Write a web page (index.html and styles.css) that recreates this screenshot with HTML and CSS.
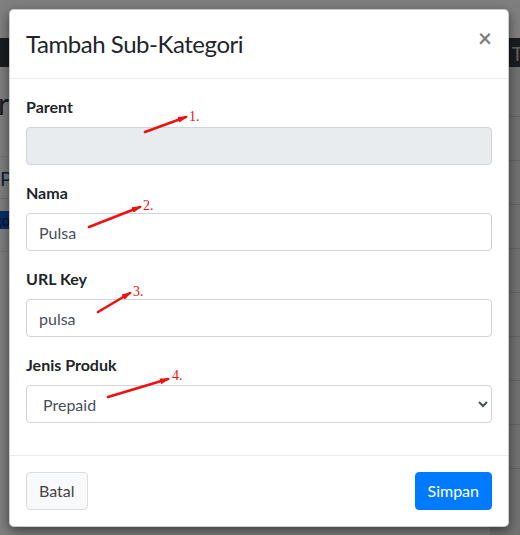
FILE: index.html
```html
<!DOCTYPE html>
<html lang="id">
<head>
<meta charset="utf-8">
<title>Tambah Sub-Kategori</title>
<link rel="stylesheet" href="styles.css">
</head>
<body>
<div class="page">
  <div class="page-top"></div>
  <div class="navbar"><span class="nav-text">Ti</span></div>
  <div class="page-main">
    <div class="page-left">
      <div class="big-r">r</div>
      <div class="row-line row-p">P</div>
      <div class="row-line row-go"><span class="go">go</span></div>
    </div>
    <div class="page-right">
      <div class="r-row"></div><div class="r-row"></div><div class="r-row"></div>
      <div class="r-row"></div><div class="r-row"></div><div class="r-row"></div>
      <div class="r-row"></div><div class="r-row"></div><div class="r-row"></div>
    </div>
  </div>
</div>
<div class="backdrop"></div>

<div class="modal">
  <div class="modal-header">
    <h4 class="modal-title">Tambah Sub-Kategori</h4>
    <button class="close" type="button">&times;</button>
  </div>
  <div class="modal-body">
    <div class="form-group">
      <label class="label">Parent</label>
      <input class="form-control" type="text" readonly>
    </div>
    <div class="form-group">
      <label class="label">Nama</label>
      <input class="form-control" type="text" value="Pulsa">
    </div>
    <div class="form-group">
      <label class="label">URL Key</label>
      <input class="form-control" type="text" value="pulsa">
    </div>
    <div class="form-group">
      <label class="label">Jenis Produk</label>
      <select class="form-control select">
        <option>Prepaid</option>
        <option>Postpaid</option>
      </select>
    </div>
  </div>
  <div class="modal-footer">
    <button class="btn btn-default" type="button">Batal</button>
    <button class="btn btn-primary" type="button">Simpan</button>
  </div>

  <svg class="notes" width="500" height="520" viewBox="0 0 500 520">
    <defs>
      <marker id="ah" markerWidth="10" markerHeight="8" refX="8" refY="4" orient="auto" markerUnits="userSpaceOnUse">
        <path d="M0 1 L10 4 L0 7 Z" fill="#f01010"/>
      </marker>
    </defs>
    <g stroke="#f01010" stroke-width="2.6" stroke-linecap="round" marker-end="url(#ah)">
      <line x1="135" y1="122" x2="176" y2="107"/>
      <line x1="79" y1="217" x2="130" y2="197"/>
      <line x1="88" y1="302" x2="120" y2="283"/>
      <line x1="98" y1="387" x2="158" y2="369"/>
    </g>
    <g class="note-text" fill="#f01010">
      <text x="179" y="111">1.</text>
      <text x="133" y="200">2.</text>
      <text x="123" y="286">3.</text>
      <text x="162" y="370">4.</text>
    </g>
  </svg>
</div>
</body>
</html>
```

FILE: styles.css
```css
* { box-sizing: border-box; }

html, body {
  margin: 0;
  padding: 0;
  width: 520px;
  height: 535px;
  overflow: hidden;
  font-family: Lato, "Source Sans Pro", "Noto Sans", sans-serif;
  color: #212529;
}

/* background page (as seen under the dark backdrop) */
.page {
  width: 520px;
  height: 535px;
  background: #fff;
  display: flex;
  flex-direction: column;
}
.page-top { height: 38px; background: #fff; }
.navbar {
  height: 29px;
  background: #343a40;
  display: flex;
  justify-content: flex-end;
  align-items: center;
}
.nav-text {
  color: #c8c8c8;
  font-size: 20px;
  margin-right: -8px;
}
.page-main {
  flex: 1;
  display: flex;
  justify-content: space-between;
}
.page-left { width: 40px; }
.big-r {
  font-size: 30px;
  line-height: 40px;
  margin-top: 16px;
  color: #343a40;
  border-bottom: 1px solid #dee2e6;
  height: 74px;
  text-indent: -2px;
}
.row-line {
  border-bottom: 1px solid #dee2e6;
  height: 48px;
  font-size: 20px;
  color: #1a3d70;
  display: flex;
  align-items: center;
}
.row-p { height: 42px; }
.row-go { height: 53px; align-items: flex-start; padding-top: 12px; }
.go {
  background: #0b5ed7;
  color: #222;
  font-size: 15px;
  line-height: 18px;
  padding-right: 4px;
  margin-left: -6px;
}
.page-right {
  width: 30px;
  background: #e4e4e4;
  display: flex;
  flex-direction: column;
  padding-top: 6px;
}
.r-row {
  height: 44px;
  border-bottom: 1px solid #c8c8c8;
}

.backdrop {
  position: absolute;
  inset: 0;
  background: rgba(0, 0, 0, 0.5);
}

/* modal */
.modal {
  position: absolute;
  left: 9px;
  top: 9px;
  width: 500px;
  background: #fff;
  border: 1px solid rgba(0, 0, 0, 0.2);
  border-radius: 4.8px;
  box-shadow: 0 4px 12px rgba(0, 0, 0, 0.5);
}
.modal-header {
  display: flex;
  align-items: flex-start;
  justify-content: space-between;
  padding: 16px;
  border-bottom: 1px solid #e9ecef;
}
.modal-title {
  margin: 0;
  font-size: 24px;
  font-weight: 400;
  line-height: 36px;
  letter-spacing: -0.45px;
  color: #212529;
}
.close {
  background: none;
  border: 0;
  padding: 16px;
  margin: -16px -16px -16px auto;
  font-family: inherit;
  font-size: 24px;
  font-weight: 700;
  line-height: 24px;
  color: #000;
  opacity: 0.5;
}
.modal-body { padding: 16px; }
.form-group { margin-bottom: 16px; }
.label {
  display: block;
  font-size: 16px;
  font-weight: 700;
  line-height: 24px;
  margin-bottom: 8px;
}
.form-control {
  display: block;
  width: 100%;
  height: 38px;
  padding: 6px 12px;
  font-family: inherit;
  font-size: 16px;
  line-height: 24px;
  color: #495057;
  background: #fff;
  border: 1px solid #ced4da;
  border-radius: 4px;
  outline: none;
}
.form-control[readonly] { background: #e9ecef; }
.select { padding-left: 12px; }

.modal-footer {
  display: flex;
  justify-content: space-between;
  align-items: center;
  padding: 12px;
  border-top: 1px solid #e9ecef;
}
.btn {
  margin: 4px;
  height: 38px;
  padding: 6px 12px;
  font-family: inherit;
  font-size: 16px;
  line-height: 24px;
  border-radius: 4px;
  border: 1px solid transparent;
}
.btn-default {
  background: #f8f9fa;
  border-color: #ddd;
  color: #444;
}
.btn-primary {
  background: #007bff;
  border-color: #007bff;
  color: #fff;
}

.notes {
  position: absolute;
  left: 0;
  top: 0;
  pointer-events: none;
}
.note-text {
  font-family: "Liberation Serif", serif;
  font-size: 14px;
}
```
